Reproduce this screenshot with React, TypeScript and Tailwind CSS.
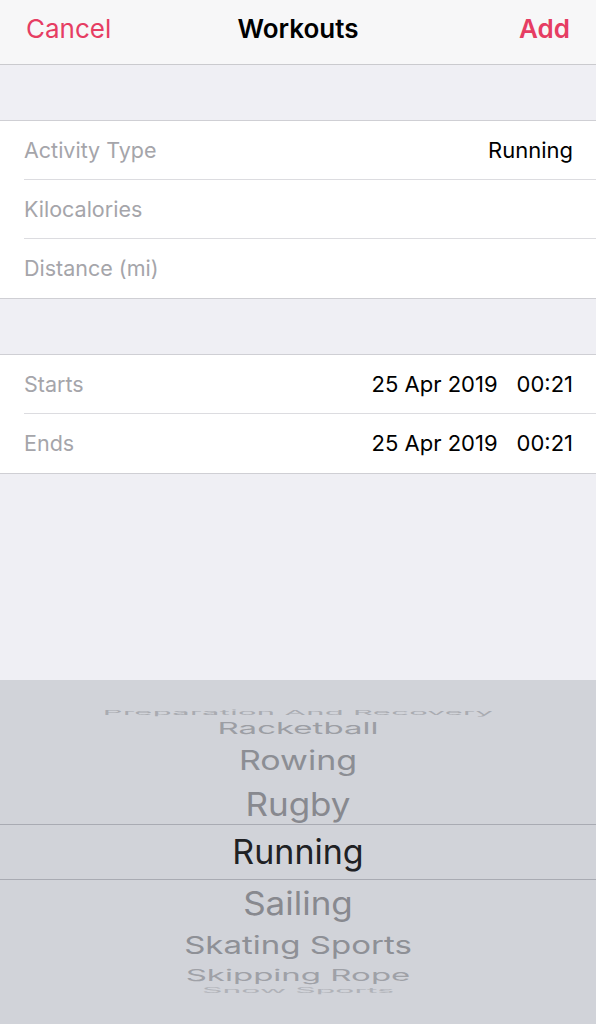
import React from 'react';

const font = { fontFamily: 'Inter, "Liberation Sans", sans-serif' };

type Row = { label: string; value?: React.ReactNode };

const sectionOne: Row[] = [
  { label: 'Activity Type', value: 'Running' },
  { label: 'Kilocalories' },
  { label: 'Distance (mi)' },
];

const DateValue = () => (
  <span className="flex gap-[19px]">
    <span>25 Apr 2019</span>
    <span>00:21</span>
  </span>
);

const sectionTwo: Row[] = [
  { label: 'Starts', value: <DateValue /> },
  { label: 'Ends', value: <DateValue /> },
];

const Section = ({ rows }: { rows: Row[] }) => (
  <div className="bg-white border-y border-[#cfcfd4]">
    {rows.map((row, i) => (
      <div key={row.label} className="pl-[24px]">
        <div
          className={`h-[59px] flex items-center justify-between pr-[23px] ${
            i < rows.length - 1 ? 'border-b border-[#dcdce0]' : ''
          }`}
        >
          <span className="text-[21.5px] text-[#a5a5aa]">{row.label}</span>
          {row.value && <span className="text-[22px] text-black">{row.value}</span>}
        </div>
      </div>
    ))}
  </div>
);

// wheel items above / below the selected one
const wheelAbove = [
  { name: 'Preparation And Recovery', h: 'h-[16px]', size: 'text-[31px]', scale: 'scale-y-[0.22]', color: 'text-[#a9abb1]', track: 'tracking-[0.3px]' },
  { name: 'Racketball', h: 'h-[16px]', size: 'text-[33px]', scale: 'scale-y-[0.5]', color: 'text-[#9c9ea4]', track: '' },
  { name: 'Rowing', h: 'h-[48px]', size: 'text-[34px]', scale: 'scale-y-[0.8]', color: 'text-[#8c8e94]', track: '' },
  { name: 'Rugby', h: 'h-[40px]', size: 'text-[35px]', scale: 'scale-y-[0.92]', color: 'text-[#88898f]', track: '' },
];

const wheelBelow = [
  { name: 'Sailing', h: 'h-[46px]', size: 'text-[35px]', scale: 'scale-y-[0.92]', color: 'text-[#88898f]', track: '' },
  { name: 'Skating Sports', h: 'h-[38px]', size: 'text-[33px]', scale: 'scale-y-[0.75]', color: 'text-[#8e9096]', track: '' },
  { name: 'Skipping Rope', h: 'h-[22px]', size: 'text-[33px]', scale: 'scale-y-[0.48]', color: 'text-[#9fa1a7]', track: '' },
  { name: 'Snow Sports', h: 'h-[10px]', size: 'text-[32px]', scale: 'scale-y-[0.22]', color: 'text-[#b0b2b8]', track: '' },
];

const WheelItem = ({ item }: { item: (typeof wheelAbove)[number] }) => (
  <div className={`${item.h} flex items-center justify-center overflow-visible`}>
    <span className={`${item.size} leading-none transform ${item.scale} ${item.color} ${item.track}`}>
      {item.name}
    </span>
  </div>
);

export default function App() {
  return (
    <div className="h-[1024px] w-full flex flex-col bg-[#efeff4]" style={font}>
      {/* Nav bar */}
      <div className="h-[65px] bg-[#f7f7f8] border-b border-[#cacace] flex items-center px-[26px] pb-[8px]">
        <div className="flex-1 text-[26px] text-[#e63d63]">Cancel</div>
        <div className="text-[26px] font-semibold text-black">Workouts</div>
        <div className="flex-1 text-right text-[26px] font-semibold text-[#e63d63]">Add</div>
      </div>

      <div className="h-[55px]" />
      <Section rows={sectionOne} />
      <div className="h-[55px]" />
      <Section rows={sectionTwo} />

      <div className="flex-1" />

      {/* Picker wheel */}
      <div className="h-[344px] bg-[#d1d3d9] pt-[24px] overflow-hidden">
        {wheelAbove.map((item) => (
          <WheelItem key={item.name} item={item} />
        ))}
        <div className="h-[56px] border-y border-[#a9abb3] flex items-center justify-center">
          <span className="text-[34px] leading-none text-[#202124]">Running</span>
        </div>
        {wheelBelow.map((item) => (
          <WheelItem key={item.name} item={item} />
        ))}
      </div>
    </div>
  );
}
